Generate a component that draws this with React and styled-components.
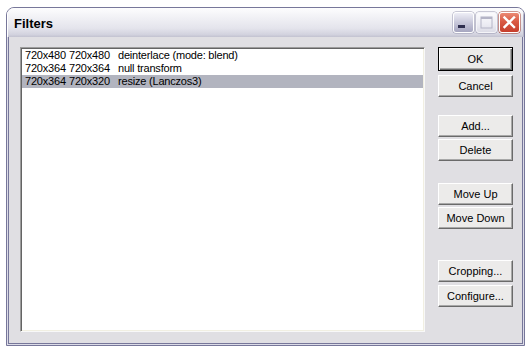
import React from "react";
import styled, { createGlobalStyle } from "styled-components";

const rows = [
  { src: "720x480", dst: "720x480", name: "deinterlace (mode: blend)" },
  { src: "720x364", dst: "720x364", name: "null transform" },
  { src: "720x364", dst: "720x320", name: "resize (Lanczos3)", selected: true },
];

const buttons = [
  { label: "OK", top: 0, isDefault: true },
  { label: "Cancel", top: 4 },
  { label: "Add...", top: 18 },
  { label: "Delete", top: 2 },
  { label: "Move Up", top: 22 },
  { label: "Move Down", top: 2 },
  { label: "Cropping...", top: 31 },
  { label: "Configure...", top: 3 },
];

const App = () => {
  return (
    <>
      <GlobalStyle />
      <Page>
        <Window>
          <TitleBar>
            <Title>Filters</Title>
            <Controls>
              <CaptionButton $kind="min" aria-label="Minimize">
                <svg width="21" height="21" viewBox="0 0 21 21">
                  <rect x="5" y="13" width="7" height="3" fill="#2e2e4e" />
                </svg>
              </CaptionButton>
              <CaptionButton $kind="max" aria-label="Maximize">
                <svg width="21" height="21" viewBox="0 0 21 21">
                  <rect x="5" y="5" width="11" height="11" fill="none" stroke="#b4b4c6" strokeWidth="1" />
                  <rect x="5" y="5" width="11" height="2" fill="#b4b4c6" />
                </svg>
              </CaptionButton>
              <CaptionButton $kind="close" aria-label="Close">
                <svg width="21" height="21" viewBox="0 0 21 21">
                  <path d="M5.5 5.5 L15 15 M15 5.5 L5.5 15" stroke="#fff" strokeWidth="2.4" strokeLinecap="square" />
                </svg>
              </CaptionButton>
            </Controls>
          </TitleBar>
          <Body>
            <ListBox>
              {rows.map((row, i) => (
                <Row key={i} $selected={row.selected}>
                  <span>{row.src}</span>
                  <span>{row.dst}</span>
                  <span>{row.name}</span>
                </Row>
              ))}
            </ListBox>
            <ButtonColumn>
              {buttons.map((b) => (
                <PushButton key={b.label} $top={b.top} $default={b.isDefault}>
                  {b.label}
                </PushButton>
              ))}
            </ButtonColumn>
          </Body>
        </Window>
      </Page>
    </>
  );
};

const GlobalStyle = createGlobalStyle`
  body {
    margin: 0;
    background: #ffffff;
    font-family: "Liberation Sans", Arial, sans-serif;
  }
`;

const Page = styled.div`
  padding: 7px 0 0 6px;
`;

const Window = styled.div`
  width: 519px;
  height: 339px;
  box-sizing: border-box;
  border: 1px solid #77779a;
  border-radius: 8px 8px 0 0;
  overflow: hidden;
  display: flex;
  flex-direction: column;
  background: #e0dfe3;
`;

const TitleBar = styled.div`
  height: 29px;
  flex: none;
  display: flex;
  align-items: flex-start;
  justify-content: space-between;
  padding: 0 4px 0 7px;
  background: linear-gradient(
    #fdfdfe 0%,
    #f2f2f6 30%,
    #e4e4ec 70%,
    #d2d2de 92%,
    #c2c2d0 100%
  );
  box-shadow: inset 1px 0 0 #ffffff, inset -1px 0 0 #b8b8c8;
`;

const Title = styled.div`
  font-family: "Liberation Sans", Arial, sans-serif;
  font-weight: bold;
  font-size: 13px;
  line-height: 15px;
  margin-top: 8px;
  color: #000;
`;

const Controls = styled.div`
  display: flex;
  gap: 2px;
  margin-top: 4px;
`;

const captionBg = {
  min: "linear-gradient(#eeeef6 0%, #c8c8da 50%, #a6a6c0 100%)",
  max: "linear-gradient(#fbfbfd 0%, #ececf3 60%, #dcdce6 100%)",
  close: "linear-gradient(#eb8a74 0%, #d95a44 45%, #c63e2c 100%)",
};

const CaptionButton = styled.div`
  width: 21px;
  height: 21px;
  box-sizing: border-box;
  border-radius: 3px;
  border: 1px solid ${(p) => (p.$kind === "max" ? "#f4f4f8" : "#ffffff")};
  box-shadow: 0 0 0 0.5px ${(p) => (p.$kind === "close" ? "#a03828" : "#9898b0")};
  background: ${(p) => captionBg[p.$kind]};
  display: flex;
  align-items: center;
  justify-content: center;
  svg {
    display: block;
    margin: -1px;
  }
`;

const Body = styled.div`
  flex: 1;
  display: flex;
  gap: 13px;
  padding: 10px 11px 13px 13px;
  box-shadow: inset 1px 0 0 #dcdce8, inset -1px 0 0 #dcdce8, inset 0 -1px 0 #dcdce8,
    inset 2px 0 0 #77779a, inset -2px 0 0 #77779a, inset 0 -2px 0 #77779a;
`;

const ListBox = styled.div`
  flex: 1;
  box-sizing: border-box;
  background: #ffffff;
  border-style: solid;
  border-width: 1px;
  border-color: #9c9c9c #f8f8f8 #f8f8f8 #9c9c9c;
  box-shadow: inset 1px 1px 0 #646464, inset -1px -1px 0 #f1efe2;
  padding: 1px 1px 0 1px;
`;

const Row = styled.div`
  display: grid;
  grid-template-columns: 44px 49px 1fr;
  height: 13px;
  line-height: 13px;
  padding-left: 3px;
  font-size: 11px;
  letter-spacing: -0.2px;
  color: #000;
  white-space: nowrap;
  background: ${(p) => (p.$selected ? "#b2b4bf" : "transparent")};
`;

const ButtonColumn = styled.div`
  width: 75px;
  display: flex;
  flex-direction: column;
`;

const PushButton = styled.div`
  margin-top: ${(p) => p.$top}px;
  height: ${(p) => (p.$default ? 24 : 22)}px;
  box-sizing: border-box;
  display: flex;
  align-items: center;
  justify-content: center;
  font-size: 11px;
  color: #000;
  background: #ecebea;
  border-style: solid;
  border-width: 1px;
  border-color: ${(p) => (p.$default ? "#000" : "#ffffff #6a6a6a #6a6a6a #ffffff")};
  box-shadow: ${(p) =>
    p.$default
      ? "inset 1px 1px 0 #ffffff, inset -1px -1px 0 #6a6a6a, inset -2px -2px 0 #a8a8a8"
      : "inset -1px -1px 0 #a8a8a8"};
`;

export default App;
